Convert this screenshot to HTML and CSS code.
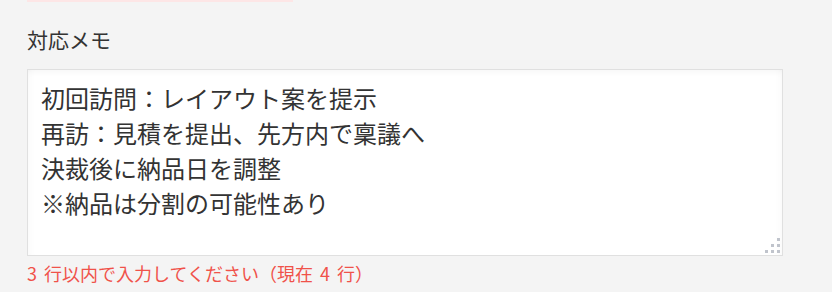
FILE: index.html
```html
<!DOCTYPE html>
<html lang="ja">
<head>
<meta charset="UTF-8" />
<meta name="viewport" content="width=device-width, initial-scale=1" />
<title>対応メモ</title>
<link rel="stylesheet" href="styles.css">
</head>
<body>

<div class="form">
  <div class="prev-field"></div>

  <div class="field">
    <label class="label" for="memo">対応メモ</label>
    <div class="memo-wrap">
      <textarea id="memo" class="memo" spellcheck="false">初回訪問：レイアウト案を提示
再訪：見積を提出、先方内で稟議へ
決裁後に納品日を調整
※納品は分割の可能性あり</textarea>
      <span class="grip"></span>
    </div>
    <div class="error">3 行以内で入力してください（現在 4 行）</div>
  </div>
</div>

</body>
</html>
```

FILE: styles.css
```css
* {
  box-sizing: border-box;
}
body {
  margin: 0;
  background: #f4f4f4;
  font-family: "Noto Sans CJK JP", "Noto Sans", sans-serif;
  color: #333;
}
.form {
  padding: 0 49px 0 27px;
}
.prev-field {
  width: 266px;
  height: 2px;
  background: #fde6e6;
}
.field {
  display: flex;
  flex-direction: column;
}
.label {
  font-size: 21px;
  line-height: 30px;
  margin-top: 22px;
  color: #333;
}
.memo-wrap {
  position: relative;
  margin-top: 15px;
}
.memo {
  display: block;
  width: 100%;
  height: 187px;
  margin: 0;
  padding: 10px 13px;
  border: 1px solid #e0e0e0;
  background: #fff;
  box-shadow: inset 0 6px 8px -6px rgba(0, 0, 0, 0.06), inset 6px 0 8px -6px rgba(0, 0, 0, 0.04), inset -6px 0 8px -6px rgba(0, 0, 0, 0.04);
  font-family: inherit;
  font-size: 24px;
  line-height: 35px;
  color: #333;
  resize: none;
  outline: none;
}
.grip {
  position: absolute;
  right: 2px;
  bottom: 2px;
  width: 16px;
  height: 16px;
  background:
    linear-gradient(#c0c4cc, #c0c4cc) 12px 0 / 3px 3px no-repeat,
    linear-gradient(#c0c4cc, #c0c4cc) 6px 6px / 3px 3px no-repeat,
    linear-gradient(#c0c4cc, #c0c4cc) 12px 6px / 3px 3px no-repeat,
    linear-gradient(#c0c4cc, #c0c4cc) 0 12px / 3px 3px no-repeat,
    linear-gradient(#c0c4cc, #c0c4cc) 6px 12px / 3px 3px no-repeat,
    linear-gradient(#c0c4cc, #c0c4cc) 12px 12px / 3px 3px no-repeat;
}
.error {
  margin-top: 4px;
  font-size: 18px;
  line-height: 26px;
  word-spacing: 3px;
  color: #f0524a;
}
```
